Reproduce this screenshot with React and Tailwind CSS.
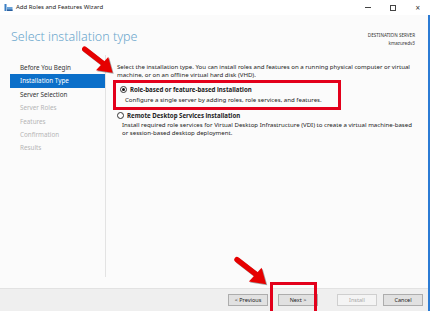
import React from "react";

const navItems = [
  { label: "Before You Begin", state: "done" },
  { label: "Installation Type", state: "active" },
  { label: "Server Selection", state: "done" },
  { label: "Server Roles", state: "off" },
  { label: "Features", state: "off" },
  { label: "Confirmation", state: "off" },
  { label: "Results", state: "off" },
];

function Arrow({ className }) {
  return (
    <svg className={className} viewBox="0 0 40 34" fill="none">
      <g transform="translate(1.2,1.2)" opacity="0.35">
        <path d="M3 4 L25 21" stroke="#000" strokeWidth="6" strokeLinecap="round" />
        <path d="M35 31 L16 28 L30 13 Z" fill="#000" />
      </g>
      <path d="M3 4 L25 21" stroke="#e60000" strokeWidth="6" strokeLinecap="round" />
      <path d="M35 31 L16 28 L30 13 Z" fill="#e60000" />
    </svg>
  );
}

function Radio({ checked }) {
  return (
    <span className="flex h-[7px] w-[7px] shrink-0 items-center justify-center rounded-full border border-[#333] bg-white">
      {checked && <span className="h-[3px] w-[3px] rounded-full bg-[#111]" />}
    </span>
  );
}

function Btn({ children, disabled, className = "" }) {
  return (
    <div
      className={
        "flex h-[12px] w-[40px] items-center justify-center border text-[5.5px] " +
        (disabled
          ? "border-[#cfcfcf] bg-[#f4f4f4] text-[#a8a8a8] "
          : "border-[#adadad] bg-[#e1e1e1] text-[#222] ") +
        className
      }
    >
      {children}
    </div>
  );
}

export default function App() {
  return (
    <div
      className="relative h-[311px] w-[430px] overflow-hidden bg-[#fbfbfb] text-[#222]"
      style={{ fontFamily: '"Noto Sans", "Open Sans", sans-serif' }}
    >
      {/* title bar */}
      <div className="flex h-[15px] items-center bg-white pl-[4px]">
        <svg width="9" height="9" viewBox="0 0 9 9" className="mr-[3px]">
          <rect x="0.5" y="1" width="2" height="7" fill="#3b7fc4" />
          <rect x="3" y="4" width="5.5" height="4" fill="#6aa3d8" />
          <rect x="3" y="6.5" width="5.5" height="1.5" fill="#2a5f9e" />
        </svg>
        <span className="text-[6px] text-[#222]">Add Roles and Features Wizard</span>
        <div className="ml-auto flex items-center gap-[19px] pr-[10px] text-[#333]">
          <span className="block h-[1px] w-[6px] bg-[#444]" />
          <span className="block h-[6px] w-[6px] border border-[#444]" />
          <span className="text-[8px] leading-none">×</span>
        </div>
      </div>

      <div className="flex h-[296px] flex-col border-r-[2px] border-[#2b7bd4]">
        {/* header */}
        <div className="flex h-[40px] items-start justify-between pl-[11px] pr-[13px]">
          <div className="mt-[16px] text-[12.5px] font-light leading-none text-[#6aa6cc]">
            Select installation type
          </div>
          <div className="mt-[16px] text-right text-[4.6px] leading-[8px] text-[#333]">
            <div>DESTINATION SERVER</div>
            <div>kmazuredv3</div>
          </div>
        </div>

        {/* body */}
        <div className="flex flex-1">
          <div className="flex w-[105px] flex-col pl-[10px] pt-[6px]">
            {navItems.map((it) => (
              <div
                key={it.label}
                className={
                  "flex h-[13.4px] items-center pl-[10px] text-[6.3px] " +
                  (it.state === "active"
                    ? "bg-[#0b6fc9] text-white"
                    : it.state === "done"
                    ? "text-[#333]"
                    : "text-[#b5b5b5]")
                }
              >
                {it.label}
              </div>
            ))}
          </div>
          <div className="mb-[11px] w-[1px] bg-[#e3e3e3]" />
          <div className="flex flex-1 flex-col pl-[11px] pr-[6px] pt-[8px] text-[6.1px] leading-[7.5px]">
            <p>
              Select the installation type. You can install roles and features on a running physical computer or virtual
              machine, or on an offline virtual hard disk (VHD).
            </p>
            <div className="mt-[2px] w-[228px] -ml-[4px] border-[3px] border-[#e3001b] pb-[4px] pl-[4px] pt-[3px]">
              <div className="flex items-center gap-[3px]">
                <Radio checked />
                <span className="font-bold">Role-based or feature-based installation</span>
              </div>
              <div className="pl-[5px] pt-[2px]">
                Configure a single server by adding roles, role services, and features.
              </div>
            </div>
            <div className="mt-[2px] flex items-center gap-[3px]">
              <Radio />
              <span className="font-bold">Remote Desktop Services installation</span>
            </div>
            <div className="pl-[5px] pt-[1px] leading-[8.5px]">
              Install required role services for Virtual Desktop Infrastructure (VDI) to create a virtual machine-based
              <br />
              or session-based desktop deployment.
            </div>
          </div>
        </div>

        {/* footer */}
        <div className="flex h-[23px] items-center border-t border-[#e2e2e2] bg-[#efefef] pl-[228px]">
          <Btn className="w-[37px]">&lt; Previous</Btn>
          <Btn className="ml-[10px] w-[38px]">Next &gt;</Btn>
          <Btn disabled className="ml-[19px]">Install</Btn>
          <Btn className="ml-[6px]">Cancel</Btn>
        </div>
      </div>

      {/* annotation overlays */}
      <div className="absolute left-[270px] top-[282px] h-[32px] w-[47px] border-[3px] border-[#e3001b]" />
      <Arrow className="absolute left-[82px] top-[45px] h-[31px] w-[35px]" />
      <Arrow className="absolute left-[233px] top-[256px] h-[31px] w-[39px]" />
    </div>
  );
}
